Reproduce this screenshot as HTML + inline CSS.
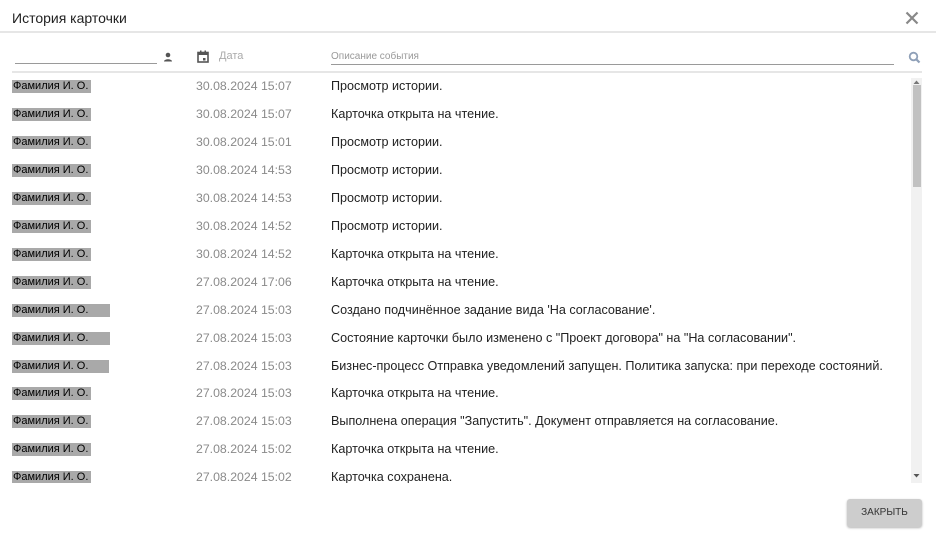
<!DOCTYPE html>
<html><head><meta charset="utf-8"><style>
body{margin:0;width:936px;height:538px;background:#fff;font-family:"Liberation Sans",Arial,sans-serif;position:relative;overflow:hidden}
.a{position:absolute}
.t{font-size:14px;color:#222;left:12px;top:10px}
.row{position:absolute;left:0;width:910px;height:28px}
.nm{position:absolute;left:12px;top:-6px;height:13px;background:#a9a9a9;font-size:11px;line-height:13px;color:#000;padding-left:1px;white-space:nowrap}
.dt{position:absolute;left:196px;top:-7px;font-size:12.3px;color:#8a8a8a;white-space:nowrap}
.ds{position:absolute;left:331px;top:-7px;font-size:12.6px;color:#222;white-space:nowrap}
#list{position:absolute;left:0;top:78px;width:910px;height:405px;overflow:hidden}
</style></head><body>
<div class="a t">История карточки</div>
<svg class="a" style="left:905px;top:11px" width="14" height="14" viewBox="0 0 14 14"><path d="M1.5 1.5L12.5 12.5M12.5 1.5L1.5 12.5" stroke="#888" stroke-width="2.2"/></svg>
<div class="a" style="left:0;top:31px;width:936px;height:2px;background:#e6e6e6"></div>
<div class="a" style="left:15px;top:63px;width:142px;height:1px;background:#9a9a9a"></div>
<svg class="a" style="left:163px;top:52px" width="10" height="10" viewBox="0 0 10 10"><circle cx="5" cy="3" r="2.3" fill="#555"/><path d="M1 9.5C1 6.5 9 6.5 9 9.5Z" fill="#555"/></svg>
<svg class="a" style="left:197px;top:50px" width="12" height="13" viewBox="0 0 12 13"><rect x="1" y="2.5" width="10" height="9.5" fill="none" stroke="#555" stroke-width="1.6"/><rect x="1" y="2.5" width="10" height="2.5" fill="#555"/><rect x="3" y="0.5" width="1.5" height="3" fill="#555"/><rect x="7.5" y="0.5" width="1.5" height="3" fill="#555"/><rect x="6" y="8" width="2.5" height="2.5" fill="#555"/></svg>
<div class="a" style="left:219px;top:50px;font-size:11px;color:#aaa">Дата</div>
<div class="a" style="left:331px;top:51px;font-size:10px;color:#999">Описание события</div>
<div class="a" style="left:331px;top:64px;width:563px;height:1px;background:#9a9a9a"></div>
<svg class="a" style="left:908px;top:51px" width="13" height="13" viewBox="0 0 13 13"><circle cx="5.5" cy="5.5" r="3.8" fill="none" stroke="#8fa0b8" stroke-width="1.8"/><path d="M8.3 8.3L11.5 11.5" stroke="#8fa0b8" stroke-width="2.2"/></svg>
<div class="a" style="left:12px;top:71px;width:910px;height:2px;background:#e6e6e6"></div>
<div class="a" style="left:911px;top:78px;width:11px;height:405px;background:#f1f1f1"></div>
<div class="a" style="left:913px;top:85px;width:8px;height:102px;background:#c1c1c1"></div>
<svg class="a" style="left:913px;top:80px" width="7" height="4"><path d="M0.5 4L3.5 0.5L6.5 4Z" fill="#777"/></svg>
<svg class="a" style="left:913px;top:474px" width="7" height="4"><path d="M0.5 0L3.5 3.5L6.5 0Z" fill="#555"/></svg>
<div id="list">
<div class="row" style="top:8px"><div class="nm" style="width:78px">Фамилия И. О.</div><div class="dt">30.08.2024 15:07</div><div class="ds">Просмотр истории.</div></div>
<div class="row" style="top:36px"><div class="nm" style="width:78px">Фамилия И. О.</div><div class="dt">30.08.2024 15:07</div><div class="ds">Карточка открыта на чтение.</div></div>
<div class="row" style="top:64px"><div class="nm" style="width:78px">Фамилия И. О.</div><div class="dt">30.08.2024 15:01</div><div class="ds">Просмотр истории.</div></div>
<div class="row" style="top:92px"><div class="nm" style="width:78px">Фамилия И. О.</div><div class="dt">30.08.2024 14:53</div><div class="ds">Просмотр истории.</div></div>
<div class="row" style="top:120px"><div class="nm" style="width:78px">Фамилия И. О.</div><div class="dt">30.08.2024 14:53</div><div class="ds">Просмотр истории.</div></div>
<div class="row" style="top:148px"><div class="nm" style="width:78px">Фамилия И. О.</div><div class="dt">30.08.2024 14:52</div><div class="ds">Просмотр истории.</div></div>
<div class="row" style="top:176px"><div class="nm" style="width:78px">Фамилия И. О.</div><div class="dt">30.08.2024 14:52</div><div class="ds">Карточка открыта на чтение.</div></div>
<div class="row" style="top:204px"><div class="nm" style="width:78px">Фамилия И. О.</div><div class="dt">27.08.2024 17:06</div><div class="ds">Карточка открыта на чтение.</div></div>
<div class="row" style="top:232px"><div class="nm" style="width:97px">Фамилия И. О.</div><div class="dt">27.08.2024 15:03</div><div class="ds">Создано подчинённое задание вида 'На согласование'.</div></div>
<div class="row" style="top:260px"><div class="nm" style="width:97px">Фамилия И. О.</div><div class="dt">27.08.2024 15:03</div><div class="ds">Состояние карточки было изменено с "Проект договора" на "На согласовании".</div></div>
<div class="row" style="top:288px"><div class="nm" style="width:96px">Фамилия И. О.</div><div class="dt">27.08.2024 15:03</div><div class="ds">Бизнес-процесс Отправка уведомлений запущен. Политика запуска: при переходе состояний.</div></div>
<div class="row" style="top:315px"><div class="nm" style="width:78px">Фамилия И. О.</div><div class="dt">27.08.2024 15:03</div><div class="ds">Карточка открыта на чтение.</div></div>
<div class="row" style="top:343px"><div class="nm" style="width:78px">Фамилия И. О.</div><div class="dt">27.08.2024 15:03</div><div class="ds">Выполнена операция "Запустить". Документ отправляется на согласование.</div></div>
<div class="row" style="top:371px"><div class="nm" style="width:78px">Фамилия И. О.</div><div class="dt">27.08.2024 15:02</div><div class="ds">Карточка открыта на чтение.</div></div>
<div class="row" style="top:399px"><div class="nm" style="width:78px">Фамилия И. О.</div><div class="dt">27.08.2024 15:02</div><div class="ds">Карточка сохранена.</div></div>
</div>
<div class="a" style="left:847px;top:499px;width:75px;height:28px;background:#cdcdcd;border-radius:3px;box-shadow:0 1px 2px rgba(0,0,0,.3);font-size:10px;color:#333;text-align:center;line-height:28px">ЗАКРЫТЬ</div>
</body></html>
